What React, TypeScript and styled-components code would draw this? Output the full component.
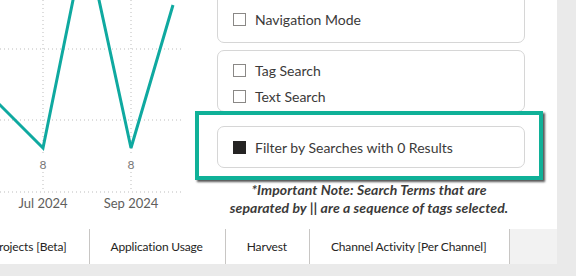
import React from "react";
import styled, { createGlobalStyle } from "styled-components";

const Global = createGlobalStyle`
  html, body { margin: 0; padding: 0; background: #eaeaea; }
  body { font-family: "Lato", "Noto Sans", sans-serif; overflow: hidden; }
`;

const Page = styled.div`
  width: 576px;
  height: 276px;
  display: flex;
  flex-direction: column;
  background: #eaeaea;
  overflow: hidden;
`;

const Canvas = styled.div`
  width: 557px;
  height: 229px;
  background: #ffffff;
  display: grid;
  grid-template-columns: 195px 348px;
  overflow: hidden;
`;

const Chart = styled.svg`
  display: block;
  width: 195px;
  height: 229px;
  overflow: hidden;
`;

const Panel = styled.div`
  display: flex;
  flex-direction: column;
`;

const Card = styled.div<{ $top?: number; $padTop: number; $padBottom: number }>`
  margin: ${(p) => p.$top ?? 0}px 18px 0 22px;
  border: 1px solid #d6d6d6;
  border-radius: 7px;
  background: #fff;
  padding: ${(p) => p.$padTop}px 14px ${(p) => p.$padBottom}px 15px;
  display: flex;
  flex-direction: column;
`;

const Row = styled.label`
  height: 26px;
  display: flex;
  align-items: center;
  gap: 9px;
  font-size: 14px;
  color: #3b3a39;
  white-space: nowrap;
`;

const Box = styled.span<{ $checked?: boolean }>`
  width: 13px;
  height: 13px;
  box-sizing: border-box;
  border: 1px solid ${(p) => (p.$checked ? "#252423" : "#8a8886")};
  background: ${(p) => (p.$checked ? "#252423" : "#fff")};
  flex: none;
`;

const Highlight = styled.div`
  margin-top: -1px;
  height: 69px;
  box-sizing: border-box;
  border: 4px solid #10b198;
  background: #fff;
  box-shadow: 2px 2px 2px rgba(30, 30, 30, 0.75);
  padding: 11px 14px 0 18px;
`;

const InnerCard = styled.div`
  height: 42px;
  box-sizing: border-box;
  border: 1px solid #d6d6d6;
  border-radius: 7px;
  padding: 0 14px 0 15px;
  display: flex;
  align-items: center;
`;

const Note = styled.p`
  margin: 1px 0 0;
  text-align: center;
  font-size: 14px;
  line-height: 18px;
  letter-spacing: 0.1px;
  font-weight: 700;
  font-style: italic;
  color: #3b3a39;
  white-space: nowrap;
`;

const TabBar = styled.div`
  width: 557px;
  height: 35px;
  background: #f2f2f2;
  display: flex;
  overflow: hidden;
`;

const Tabs = styled.div`
  display: flex;
  margin-left: -29px;
`;

const Tab = styled.div`
  background: #fff;
  border-right: 1px solid #c8c6c4;
  padding: 0 22px 0 21px;
  display: flex;
  align-items: center;
  font-size: 12px;
  letter-spacing: -0.15px;
  color: #252423;
  white-space: nowrap;
`;

const grid = "#bdbdbd";

const ChartDrawing = () => (
  <Chart viewBox="0 0 195 229">
    {[49, 120, 192].map((y) => (
      <line key={y} x1={0} x2={182} y1={y} y2={y} stroke={grid} strokeWidth={1} strokeDasharray="1 3" />
    ))}
    {[43, 131].map((x) => (
      <g key={x}>
        <line x1={x} x2={x} y1={0} y2={156} stroke={grid} strokeWidth={1} strokeDasharray="1 3" />
        <line x1={x} x2={x} y1={172} y2={192} stroke={grid} strokeWidth={1} strokeDasharray="1 3" />
      </g>
    ))}
    <polyline
      points="-12,93 43,148 85.6,-62 131,148 173,5"
      fill="none"
      stroke="#0fa9a0"
      strokeWidth={3}
      strokeLinejoin="miter"
    />
    {[43, 131].map((x) => (
      <text key={x} x={x} y={169} textAnchor="middle" fontSize={12} fill="#777" fontFamily="Lato, sans-serif">
        8
      </text>
    ))}
    <text x={43} y={208} textAnchor="middle" fontSize={13} fill="#605e5c" fontFamily="Lato, sans-serif">
      Jul 2024
    </text>
    <text x={131} y={208} textAnchor="middle" fontSize={13} fill="#605e5c" fontFamily="Lato, sans-serif">
      Sep 2024
    </text>
  </Chart>
);

export default function App() {
  return (
    <Page>
      <Global />
      <Canvas>
        <ChartDrawing />
        <Panel>
          <Card $top={-10} $padTop={15} $padBottom={10}>
            <Row>
              <Box />
              Navigation Mode
            </Row>
          </Card>
          <Card $top={7} $padTop={6} $padBottom={2}>
            <Row>
              <Box />
              Tag Search
            </Row>
            <Row>
              <Box />
              Text Search
            </Row>
          </Card>
          <Highlight>
            <InnerCard>
              <Row>
                <Box $checked />
                Filter by Searches with 0 Results
              </Row>
            </InnerCard>
          </Highlight>
          <Note>
            *Important Note: Search Terms that are
            <br />
            separated by || are a sequence of tags selected.
          </Note>
        </Panel>
      </Canvas>
      <TabBar>
        <Tabs>
          <Tab>Projects [Beta]</Tab>
          <Tab>Application Usage</Tab>
          <Tab>Harvest</Tab>
          <Tab>Channel Activity [Per Channel]</Tab>
        </Tabs>
      </TabBar>
    </Page>
  );
}
